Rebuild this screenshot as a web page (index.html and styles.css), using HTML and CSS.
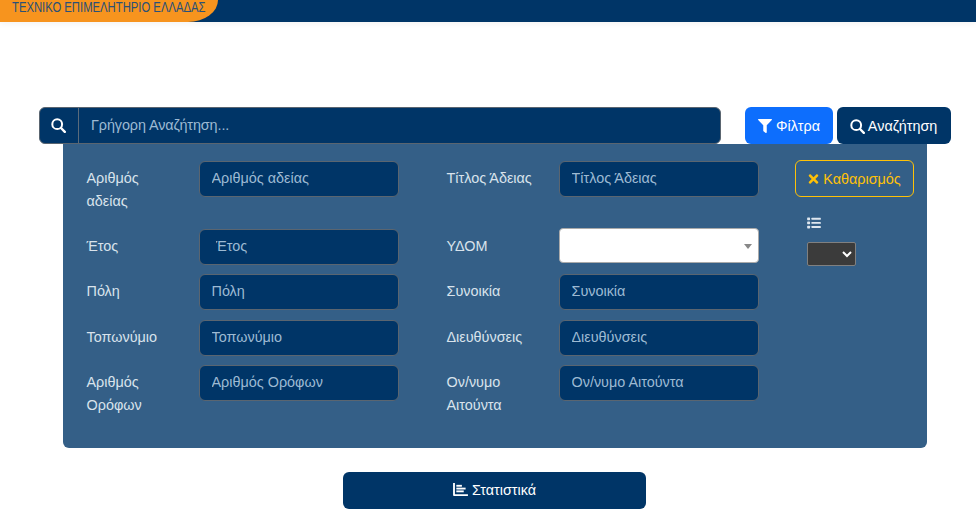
FILE: index.html
```html
<!DOCTYPE html>
<html lang="el">
<head>
<meta charset="utf-8">
<title>Αναζήτηση</title>
<link rel="stylesheet" href="styles.css">
</head>
<body>
<header class="topbar">
  <div class="logo"><span class="logo-text">ΤΕΧΝΙΚΟ ΕΠΙΜΕΛΗΤΗΡΙΟ ΕΛΛΑΔΑΣ</span></div>
</header>
<main class="content">
  <div class="search-row">
    <div class="search-group">
      <span class="search-addon">
        <svg class="icon icon-search" viewBox="0 0 15 15"><g fill="none" stroke="currentColor"><circle cx="6.2" cy="6.2" r="4.9" stroke-width="2"/><path d="M10 10l3.8 3.8" stroke-width="2.4" stroke-linecap="round"/></g></svg>
      </span>
      <input class="search-input" type="text" placeholder="Γρήγορη Αναζήτηση...">
    </div>
    <div class="search-actions">
      <button class="btn btn-filter" type="button">
        <svg class="icon icon-14" viewBox="0 0 512 512"><path fill="currentColor" d="M487.976 0H24.028C2.71 0-8.047 25.866 7.058 40.971L192 225.941V432c0 7.831 3.821 15.17 10.237 19.662l80 55.98C298.02 518.69 320 507.493 320 487.98V225.941l184.947-184.97C520.021 25.896 509.338 0 487.976 0z"/></svg>
        Φίλτρα
      </button>
      <button class="btn btn-search" type="button">
        <svg class="icon icon-search icon-search-btn" viewBox="0 0 15 15"><g fill="none" stroke="currentColor"><circle cx="6.2" cy="6.2" r="4.9" stroke-width="2"/><path d="M10 10l3.8 3.8" stroke-width="2.4" stroke-linecap="round"/></g></svg>
        Αναζήτηση
      </button>
    </div>
  </div>

  <section class="panel">
    <form class="filter-grid">
      <label class="field-label label-tall">Αριθμός αδείας</label>
      <input class="field" type="text" placeholder="Αριθμός αδείας">
      <label class="field-label">Τίτλος Άδειας</label>
      <input class="field" type="text" placeholder="Τίτλος Άδειας">

      <label class="field-label">Έτος</label>
      <input class="field field-year" type="text" placeholder="Έτος">
      <label class="field-label">ΥΔΟΜ</label>
      <div class="select-box"><span class="select-arrow"></span></div>

      <label class="field-label">Πόλη</label>
      <input class="field" type="text" placeholder="Πόλη">
      <label class="field-label">Συνοικία</label>
      <input class="field" type="text" placeholder="Συνοικία">

      <label class="field-label">Τοπωνύμιο</label>
      <input class="field" type="text" placeholder="Τοπωνύμιο">
      <label class="field-label">Διευθύνσεις</label>
      <input class="field" type="text" placeholder="Διευθύνσεις">

      <label class="field-label label-tall">Αριθμός Ορόφων</label>
      <input class="field" type="text" placeholder="Αριθμός Ορόφων">
      <label class="field-label label-tall">Ον/νυμο Αιτούντα</label>
      <input class="field" type="text" placeholder="Ον/νυμο Αιτούντα">
    </form>
    <aside class="panel-side">
      <button class="btn-clear" type="button">
        <svg class="icon icon-x" viewBox="0 0 352 512"><path fill="currentColor" d="M242.72 256l100.07-100.07c12.28-12.28 12.28-32.19 0-44.48l-22.24-22.24c-12.28-12.28-32.19-12.28-44.48 0L176 189.28 75.93 89.21c-12.28-12.28-32.19-12.28-44.48 0L9.21 111.45c-12.28 12.28-12.28 32.19 0 44.48L109.28 256 9.21 356.07c-12.28 12.28-12.28 32.19 0 44.48l22.24 22.24c12.28 12.28 32.2 12.28 44.48 0L176 322.72l100.07 100.07c12.28 12.28 32.2 12.28 44.48 0l22.24-22.24c12.28-12.28 12.28-32.19 0-44.48L242.72 256z"/></svg>
        Καθαρισμός
      </button>
      <svg class="icon icon-list" viewBox="0 0 16 14"><g fill="currentColor"><rect x="0" y="0.5" width="3.4" height="3.2" rx=".8"/><rect x="0" y="5.3" width="3.4" height="3.2" rx=".8"/><rect x="0" y="10.1" width="3.4" height="3.2" rx=".8"/><rect x="5" y="1" width="11" height="2.2" rx=".5"/><rect x="5" y="5.8" width="11" height="2.2" rx=".5"/><rect x="5" y="10.6" width="11" height="2.2" rx=".5"/></g></svg>
      <select class="page-select"><option></option></select>
    </aside>
  </section>

  <div class="stats-row">
    <button class="btn btn-stats" type="button">
      <svg class="icon icon-chart" viewBox="0 0 16 14"><g fill="currentColor"><path d="M0 0h2v12h14v2H1a1 1 0 0 1-1-1z"/><rect x="3.5" y="2" width="6" height="2"/><rect x="3.5" y="5" width="10" height="2"/><rect x="3.5" y="8" width="8" height="2"/></g></svg>
      Στατιστικά
    </button>
  </div>
</main>
</body>
</html>
```
FILE: styles.css
```css
* { box-sizing: border-box; }

html, body {
  margin: 0;
  padding: 0;
  background: #fff;
}

body {
  font-family: "Liberation Sans", Arial, sans-serif;
  font-size: 14.4px;
  color: #fff;
  overflow: hidden;
}

.topbar {
  height: 22px;
  background: #003567;
  box-shadow: 0 2px 6px rgba(0, 0, 0, .05);
}

.logo {
  width: 218px;
  height: 22px;
  padding: 1px 0 0 12px;
  background: #f7941e;
  border-bottom-right-radius: 30px 22px;
}

.logo-text {
  display: block;
  width: max-content;
  font-size: 15.5px;
  line-height: 12px;
  color: #2a5078;
  white-space: nowrap;
  transform: scaleX(.728);
  transform-origin: left center;
}

.content {
  padding: 85px 25px 0 39px;
}

.search-row {
  display: flex;
  height: 37px;
}

.search-group {
  display: flex;
  width: 682px;
  height: 37px;
  background: #003567;
  border: 1px solid #5a6570;
  border-radius: 6px;
  overflow: hidden;
}

.search-addon {
  flex: none;
  display: flex;
  align-items: center;
  justify-content: center;
  width: 39px;
  padding-right: 1px;
  border-right: 1px solid #5a6b7b;
}

.search-input {
  flex: 1;
  min-width: 0;
  border: 0;
  outline: 0;
  background: transparent;
  padding: 0 12px 2px;
  font: inherit;
  letter-spacing: -.1px;
  color: #fff;
}

.search-input::placeholder,
.field::placeholder {
  color: #9dbad3;
  opacity: 1;
}

.search-actions {
  display: flex;
  gap: 4px;
  margin-left: 24px;
}

.icon {
  display: inline-block;
  vertical-align: -2px;
}

.icon-14 {
  width: 14px;
  height: 14px;
}

.icon-search {
  width: 15px;
  height: 15px;
}

.icon-search-btn {
  margin-left: -1px;
  vertical-align: -3px;
}

.btn {
  display: inline-block;
  border: 0;
  border-radius: 6px;
  font: inherit;
  color: #fff;
  text-align: center;
  padding: 0;
}

.btn-filter {
  width: 88px;
  height: 37px;
  background: #0d6efd;
}

.btn-search {
  width: 114px;
  height: 37px;
  background: #003567;
}

.panel {
  display: flex;
  width: 864px;
  height: 304px;
  margin-left: 24px;
  background: #345f87;
  border-radius: 0 0 6px 6px;
  padding: 17px 0 0 24px;
}

.filter-grid {
  display: grid;
  grid-template-columns: 112px 200px 160px 200px;
  grid-template-rows: 59px 36px 37px 36px auto;
  row-gap: 9px;
  align-content: start;
  width: 672px;
}

.filter-grid > :nth-child(4n+1) {
  margin-left: -.5px;
}

.filter-grid > :nth-child(4n+3) {
  margin-left: 47.5px;
  width: 112px;
}

.field-label {
  display: block;
  padding-top: 5.5px;
  line-height: 23px;
  color: #d9e3ec;
}

.label-tall {
  padding-bottom: 7px;
  padding-right: 30px;
}

.field {
  width: 200px;
  height: 36px;
  background: #003567;
  border: 1px solid #5a6570;
  border-radius: 6px;
  padding: 0 12px 2px 11.5px;
  font: inherit;
  color: #fff;
  outline: 0;
}

.field-year {
  padding-left: 15.5px;
}

.select-box {
  position: relative;
  width: 200px;
  height: 35px;
  margin-top: -1px;
  background: #fff;
  border: 1px solid #aaa;
  border-radius: 4px;
}

.select-arrow {
  position: absolute;
  top: 15px;
  right: 6px;
  border-style: solid;
  border-width: 5px 4px 0;
  border-color: #888 transparent transparent;
}

.panel-side {
  display: flex;
  flex-direction: column;
  align-items: flex-start;
  margin-left: 36px;
  margin-top: -1px;
}

.btn-clear {
  width: 119px;
  height: 37px;
  background: transparent;
  border: 1px solid #ffc107;
  border-radius: 6px;
  color: #ffc107;
  font: inherit;
  padding: 0;
}

.icon-x {
  width: 11px;
  height: 14px;
  vertical-align: -2px;
}

.icon-list {
  width: 14px;
  height: 12px;
  margin: 20px 0 0 12px;
  color: #dfe7ef;
}

.page-select {
  width: 49px;
  height: 24px;
  margin: 13px 0 0 12px;
  background: #3b3b3b;
  border: 1px solid #808080;
  border-radius: 2px;
  color: #fff;
  font: inherit;
  color-scheme: dark;
}

.stats-row {
  margin: 24px 0 0 304px;
}

.btn-stats {
  width: 303px;
  height: 37px;
  padding-bottom: 2px;
  background: #003567;
}

.icon-chart {
  width: 15px;
  height: 13px;
  vertical-align: -1px;
}
```
